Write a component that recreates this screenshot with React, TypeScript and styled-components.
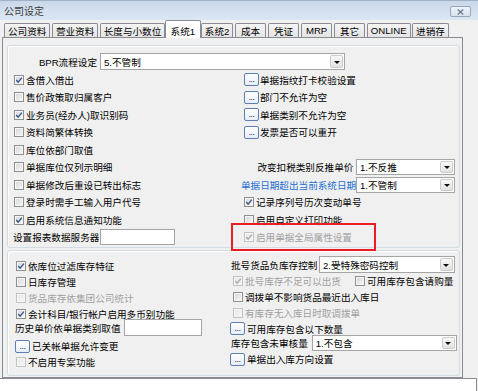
import React from "react";
import styled, { createGlobalStyle } from "styled-components";

const GlobalStyle = createGlobalStyle`
  * { box-sizing: border-box; }
  html, body { margin: 0; padding: 0; background: #f0f0f0; }
  body {
    font-family: "Liberation Sans", "Noto Sans CJK SC", sans-serif;
    font-size: 9.6px;
    color: #000;
  }
`;

const Window = styled.div`
  position: relative;
  width: 478px;
  height: 391px;
  overflow: hidden;
  background: #f0f0f0;
  display: flex;
  flex-direction: column;
`;

const TitleBar = styled.div`
  flex: none;
  height: 20px;
  display: flex;
  align-items: center;
  justify-content: space-between;
  padding: 0 7px 0 4px;
  background: linear-gradient(#c9d8ea, #dce7f3);
  border-top: 1px solid #9fb2c7;
`;

const Title = styled.span`
  font-size: 10px;
  color: #3c3c3c;
`;

const CloseBtn = styled.span`
  width: 21px;
  height: 11px;
  margin-top: 2px;
  border: 1px solid #98a7b8;
  border-radius: 2px;
  background: linear-gradient(#f0f4f9, #d8e2ed);
  display: flex;
  align-items: center;
  justify-content: center;
`;

const TabStrip = styled.div`
  flex: none;
  height: 18px;
  display: flex;
  align-items: flex-end;
  padding-left: 4px;
  position: relative;
  z-index: 1;
  margin-bottom: -1px;
`;

const Tab = styled.div<{ $active?: boolean }>`
  flex: none;
  height: ${(p) => (p.$active ? 18 : 14)}px;
  min-width: ${(p) => (p.$active ? 36 : 31.5)}px;
  margin-bottom: ${(p) => (p.$active ? 0 : 1)}px;
  margin-right: ${(p) => (p.$active ? 0 : 1.5)}px;
  margin-left: ${(p) => (p.$active ? -2 : 0)}px;
  padding: ${(p) => (p.$active ? "2px 3px 0" : "0 3px")};
  border: 1px solid #898c95;
  border-bottom: none;
  border-radius: 2px 2px 0 0;
  background: ${(p) => (p.$active ? "#ffffff" : "linear-gradient(#f5f5f5, #e4e4e4)")};
  display: flex;
  align-items: center;
  justify-content: center;
  white-space: nowrap;
`;

const TabSheet = styled.div`
  flex: none;
  margin-left: 2px;
  width: 461px;
  height: 341px;
  border: 1px solid #898c95;
  background: #f0f0f0;
  padding: 7px 2px 0 4px;
  display: flex;
  flex-direction: column;
  gap: 2px;
`;

const BottomPanel = styled.div`
  flex: 1;
  width: 477px;
  background: #ffffff;
  border-top: 1px solid #8a8a8a;
  border-right: 1px solid #8a8a8a;
`;

const Group = styled.div<{ $h: number; $pad: string }>`
  flex: none;
  height: ${(p) => p.$h}px;
  border: 1px solid #d3dce2;
  border-radius: 3px;
  box-shadow: inset 1px 1px 0 #ffffff;
  padding: ${(p) => p.$pad};
  display: flex;
  flex-direction: column;
`;

const Columns = styled.div<{ $cols: string; $mt?: number }>`
  display: grid;
  grid-template-columns: ${(p) => p.$cols};
  margin-top: ${(p) => p.$mt ?? 0}px;
  align-items: start;
`;

const Col = styled.div<{ $pt?: number }>`
  display: flex;
  flex-direction: column;
  padding-top: ${(p) => p.$pt ?? 0}px;
`;

const Row = styled.div<{ $h: number; $mt?: number }>`
  height: ${(p) => p.$h}px;
  margin-top: ${(p) => p.$mt ?? 0}px;
  display: flex;
  align-items: center;
  white-space: nowrap;
`;

const Text = styled.span<{ $tone?: "normal" | "disabled" | "blue" }>`
  color: ${(p) => (p.$tone === "disabled" ? "#a0a0a0" : p.$tone === "blue" ? "#1f6fd3" : "#000")};
`;

const FieldLabel = styled.span<{ $w?: number; $align?: "left" | "right"; $tone?: "normal" | "blue"; $mr?: number }>`
  flex: none;
  width: ${(p) => (p.$w ? `${p.$w}px` : "auto")};
  text-align: ${(p) => p.$align ?? "left"};
  margin-right: ${(p) => p.$mr ?? 0}px;
  overflow: hidden;
  white-space: nowrap;
  color: ${(p) => (p.$tone === "blue" ? "#1f6fd3" : "#000")};
`;

const Select = styled.div<{ $w: number; $h?: number; $ml?: number }>`
  flex: none;
  width: ${(p) => p.$w}px;
  height: ${(p) => p.$h ?? 17}px;
  margin-left: ${(p) => p.$ml ?? 0}px;
  border: 1px solid #a5a5a5;
  background: #ffffff;
  display: flex;
  align-items: stretch;
  justify-content: space-between;
  padding-left: 3px;
  position: relative;
  z-index: 1;
`;

const SelectValue = styled.span`
  display: flex;
  align-items: center;
`;

const Arrow = styled.span`
  flex: none;
  width: 13px;
  margin: 1px;
  border: 1px solid #cbcbcb;
  border-radius: 2px;
  background: linear-gradient(#f8f8f8, #e2e2e2);
  display: flex;
  align-items: center;
  justify-content: center;
  &::after {
    content: "";
    border-left: 3px solid transparent;
    border-right: 3px solid transparent;
    border-top: 3px solid #111;
    margin-top: 1px;
  }
`;

const Input = styled.div<{ $w: number; $h: number; $ml?: number }>`
  flex: none;
  width: ${(p) => p.$w}px;
  height: ${(p) => p.$h}px;
  margin-left: ${(p) => p.$ml ?? 0}px;
  border: 1px solid #a5a5a5;
  background: #ffffff;
`;

const Box = styled.span<{ $tone: "normal" | "disabled" | "grey"; $ml: number }>`
  flex: none;
  width: 10px;
  height: 10px;
  margin-left: ${(p) => p.$ml}px;
  margin-right: 2px;
  border: 1px solid ${(p) => (p.$tone === "normal" ? "#8e8f8f" : "#c3c3c3")};
  background: ${(p) =>
    p.$tone === "normal"
      ? "linear-gradient(135deg, #d2d5da, #f8f8f8)"
      : "linear-gradient(135deg, #e6e6e6, #f6f6f6)"};
  box-shadow: inset 0 0 0 1px #f6f6f6;
  display: flex;
  align-items: center;
  justify-content: center;
`;

const Dots = styled.span<{ $ml: number; $w?: number }>`
  flex: none;
  width: ${(p) => p.$w ?? 15}px;
  height: 13px;
  margin-left: ${(p) => p.$ml}px;
  margin-right: 1px;
  border: 1px solid #5d7fb3;
  border-radius: 2px;
  background: linear-gradient(#ffffff, #e6edf6);
  display: flex;
  align-items: flex-end;
  justify-content: center;
  font-size: 9px;
  line-height: 9px;
  letter-spacing: -0.5px;
  color: #1a2b55;
  padding-bottom: 1px;
`;

const PairItem = styled.span<{ $w: number }>`
  flex: none;
  width: ${(p) => p.$w}px;
  display: flex;
  align-items: center;
`;

const RedMark = styled.div`
  position: absolute;
  left: 231px;
  top: 223px;
  width: 145px;
  height: 28px;
  border: 2px solid #ec1c24;
  z-index: 5;
  pointer-events: none;
`;

type Tone = "normal" | "disabled" | "grey";

const Tick = ({ tone }: { tone: Tone }) => (
  <svg width="8" height="8" viewBox="0 0 8 8">
    <path
      d="M1.2 4.1 L3.1 6.1 L6.9 1.6"
      fill="none"
      stroke={tone === "normal" ? "#3b5689" : "#a9a9a9"}
      strokeWidth="1.4"
    />
  </svg>
);

const CheckBox = ({ checked, tone = "normal", ml }: { checked?: boolean; tone?: Tone; ml: number }) => (
  <Box $tone={tone} $ml={ml}>{checked ? <Tick tone={tone} /> : null}</Box>
);

const CheckRow = ({
  h,
  ml,
  checked,
  tone = "normal",
  text,
  mt,
}: {
  h: number;
  ml: number;
  checked?: boolean;
  tone?: Tone;
  text: string;
  mt?: number;
}) => (
  <Row $h={h} $mt={mt}>
    <CheckBox checked={checked} tone={tone} ml={ml} />
    <Text $tone={tone === "disabled" ? "disabled" : "normal"}>{text}</Text>
  </Row>
);

const DotsRow = ({ h, ml, text, mt, gap }: { h: number; ml: number; text: string; mt?: number; gap?: number }) => (
  <Row $h={h} $mt={mt}>
    <Dots $ml={ml} style={gap !== undefined ? { marginRight: gap } : undefined}>...</Dots>
    <Text>{text}</Text>
  </Row>
);

const Combo = ({ w, h, ml, value }: { w: number; h?: number; ml?: number; value: string }) => (
  <Select $w={w} $h={h} $ml={ml}>
    <SelectValue>{value}</SelectValue>
    <Arrow />
  </Select>
);

const tabs = ["公司资料", "营业资料", "长度与小数位", "系统1", "系统2", "成本", "凭证", "MRP", "其它", "ONLINE", "进销存"];

const R1 = 17.5;

export default function App() {
  return (
    <>
      <GlobalStyle />
      <Window>
        <TitleBar>
          <Title>公司设定</Title>
          <CloseBtn>
            <svg width="7" height="6" viewBox="0 0 7 6">
              <path d="M0.8 0.6 L6.2 5.4 M6.2 0.6 L0.8 5.4" stroke="#6b7a8c" strokeWidth="1.3" />
            </svg>
          </CloseBtn>
        </TitleBar>

        <TabStrip>
          {tabs.map((t) => (
            <Tab key={t} $active={t === "系统1"}>
              {t}
            </Tab>
          ))}
        </TabStrip>

        <TabSheet>
          <Group $h={203} $pad="7px 4px 0 5px">
            <Row $h={17}>
              <FieldLabel $w={84} $align="right" $mr={3}>
                BPR流程设定
              </FieldLabel>
              <Combo w={245} value="5.不管制" />
            </Row>
            <Columns $cols="228px 214px" $mt={1}>
              <Col>
                <CheckRow h={R1} ml={1} checked text="含借入借出" />
                <CheckRow h={R1} ml={1} text="售价政策取归属客户" />
                <CheckRow h={R1} ml={1} checked text="业务员(经办人)取识别码" />
                <CheckRow h={R1} ml={1} text="资料简繁体转换" />
                <CheckRow h={R1} ml={1} text="库位依部门取值" />
                <CheckRow h={R1} ml={1} text="单据库位仅列示明细" />
                <CheckRow h={R1} ml={1} text="单据修改后重设已转出标志" />
                <CheckRow h={R1} ml={1} text="登录时需手工输入用户代号" />
                <CheckRow h={R1} ml={1} checked text="启用系统信息通知功能" />
                <Row $h={R1}>
                  <FieldLabel>设置报表数据服务器</FieldLabel>
                  <Input $w={75} $h={16} $ml={1} />
                </Row>
              </Col>
              <Col>
                <DotsRow h={R1} ml={3} text="单据指纹打卡校验设置" />
                <DotsRow h={R1} ml={3} text="部门不允许为空" />
                <DotsRow h={R1} ml={3} text="单据类别不允许为空" />
                <DotsRow h={R1} ml={3} text="发票是否可以重开" />
                <Row $h={R1} />
                <Row $h={R1}>
                  <FieldLabel $w={115} $align="right">
                    改变扣税类别反推单价&nbsp;
                  </FieldLabel>
                  <Combo w={99} h={16} value="1.不反推" />
                </Row>
                <Row $h={R1}>
                  <FieldLabel $w={115} $tone="blue">
                    单据日期超出当前系统日期
                  </FieldLabel>
                  <Combo w={99} h={16} value="1.不管制" />
                </Row>
                <CheckRow h={R1} ml={3} checked text="记录序列号历次变动单号" />
                <CheckRow h={R1} ml={3} text="启用自定义打印功能" />
                <CheckRow h={R1} ml={3} checked tone="disabled" text="启用单据全局属性设置" />
              </Col>
            </Columns>
          </Group>

          <Group $h={126} $pad="0 0 0 7px">
            <Columns $cols="216px 228px">
              <Col $pt={7}>
                <CheckRow h={16} ml={1} checked text="依库位过滤库存特征" />
                <CheckRow h={16} ml={1} text="日库存管理" />
                <CheckRow h={16} ml={1} tone="disabled" text="货品库存依集团公司统计" />
                <CheckRow h={16} ml={1} checked text="会计科目/银行帐户启用多币别功能" />
                <Row $h={17} $mt={-3}>
                  <FieldLabel>历史单价依单据类别取值</FieldLabel>
                  <Input $w={78} $h={17} $ml={3} />
                </Row>
                <DotsRow h={16} ml={0} mt={2} gap={2} text="已关帐单据允许变更" />
                <CheckRow h={16} ml={1} tone="grey" text="不启用专案功能" />
              </Col>
              <Col $pt={5}>
                <Row $h={17}>
                  <FieldLabel>批号货品负库存控制</FieldLabel>
                  <Combo w={136} ml={1.6} value="2.受特殊密码控制" />
                </Row>
                <Row $h={16}>
                  <PairItem $w={124}>
                    <CheckBox checked tone="disabled" ml={2} />
                    <Text $tone="disabled">批号库存不足可以出货</Text>
                  </PairItem>
                  <CheckBox ml={0} />
                  <Text>可用库存包含请购量</Text>
                </Row>
                <CheckRow h={16} ml={2} text="调拨单不影响货品最近出入库日" />
                <CheckRow h={16} ml={2} tone="disabled" text="有库存无入库日时取调拨单" />
                <DotsRow h={15} ml={-1} gap={2} text="可用库存包含以下数量" />
                <Row $h={16} $mt={-1}>
                  <FieldLabel>库存包含未审核量</FieldLabel>
                  <Combo w={145} h={16} ml={4} value="1.不包含" />
                </Row>
                <DotsRow h={16} ml={-1} gap={2} text="单据出入库方向设置" />
              </Col>
            </Columns>
          </Group>
        </TabSheet>

        <BottomPanel />
        <RedMark />
      </Window>
    </>
  );
}
